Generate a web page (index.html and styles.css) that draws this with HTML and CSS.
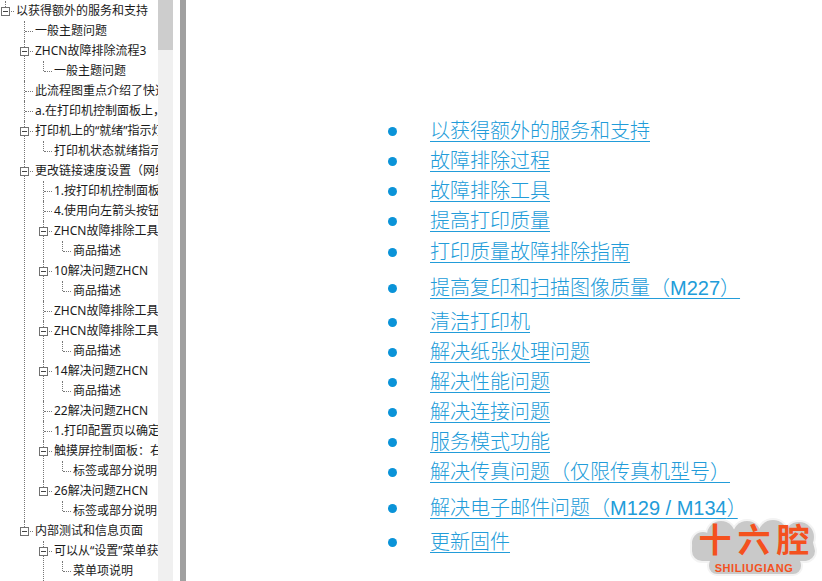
FILE: index.html
```html
<!DOCTYPE html>
<html lang="zh-CN">
<head>
<meta charset="utf-8">
<title>以获得额外的服务和支持</title>
<link rel="stylesheet" href="styles.css">
</head>
<body>
<div class="app">
  <nav class="tree-pane">
    <ul class="tree root">
      <li class="node open"><span class="label">以获得额外的服务和支持</span>
        <ul class="tree">
          <li class="node"><span class="label">一般主题问题</span></li>
          <li class="node open"><span class="label">ZHCN故障排除流程3</span>
            <ul class="tree"><li class="node"><span class="label">一般主题问题</span></li></ul>
          </li>
          <li class="node"><span class="label">此流程图重点介绍了快速解决问题的方法</span></li>
          <li class="node"><span class="label">a.在打印机控制面板上，按下按钮</span></li>
          <li class="node open"><span class="label">打印机上的“就绪”指示灯</span>
            <ul class="tree"><li class="node"><span class="label">打印机状态就绪指示灯说明</span></li></ul>
          </li>
          <li class="node open"><span class="label">更改链接速度设置（网络）</span>
            <ul class="tree">
              <li class="node"><span class="label">1.按打印机控制面板上的按钮</span></li>
              <li class="node"><span class="label">4.使用向左箭头按钮选择</span></li>
              <li class="node open"><span class="label">ZHCN故障排除工具</span>
                <ul class="tree"><li class="node"><span class="label">商品描述</span></li></ul>
              </li>
              <li class="node open"><span class="label">10解决问题ZHCN</span>
                <ul class="tree"><li class="node"><span class="label">商品描述</span></li></ul>
              </li>
              <li class="node"><span class="label">ZHCN故障排除工具</span></li>
              <li class="node open"><span class="label">ZHCN故障排除工具</span>
                <ul class="tree"><li class="node"><span class="label">商品描述</span></li></ul>
              </li>
              <li class="node open"><span class="label">14解决问题ZHCN</span>
                <ul class="tree"><li class="node"><span class="label">商品描述</span></li></ul>
              </li>
              <li class="node"><span class="label">22解决问题ZHCN</span></li>
              <li class="node"><span class="label">1.打印配置页以确定网络</span></li>
              <li class="node open"><span class="label">触摸屏控制面板：右侧按钮</span>
                <ul class="tree"><li class="node"><span class="label">标签或部分说明</span></li></ul>
              </li>
              <li class="node open"><span class="label">26解决问题ZHCN</span>
                <ul class="tree"><li class="node"><span class="label">标签或部分说明</span></li></ul>
              </li>
            </ul>
          </li>
          <li class="node open"><span class="label">内部测试和信息页面</span>
            <ul class="tree">
              <li class="node open"><span class="label">可以从“设置”菜单获取</span>
                <ul class="tree"><li class="node"><span class="label">菜单项说明</span></li></ul>
              </li>
              <li class="node"><span class="label">菜单项说明</span></li>
            </ul>
          </li>
        </ul>
      </li>
    </ul>
  </nav>
  <div class="scrollbar"><div class="thumb"></div></div>
  <div class="gutter"></div>
  <div class="divider"></div>
  <main class="content">
    <ul class="links">
      <li class="link-row"><span class="bullet"></span><a href="#">以获得额外的服务和支持</a></li>
      <li class="link-row"><span class="bullet"></span><a href="#">故障排除过程</a></li>
      <li class="link-row"><span class="bullet"></span><a href="#">故障排除工具</a></li>
      <li class="link-row"><span class="bullet"></span><a href="#">提高打印质量</a></li>
      <li class="link-row nudge"><span class="bullet"></span><a href="#">打印质量故障排除指南</a></li>
      <li class="link-row tall"><span class="bullet"></span><a href="#">提高复印和扫描图像质量（M227）</a></li>
      <li class="link-row"><span class="bullet"></span><a href="#">清洁打印机</a></li>
      <li class="link-row"><span class="bullet"></span><a href="#">解决纸张处理问题</a></li>
      <li class="link-row"><span class="bullet"></span><a href="#">解决性能问题</a></li>
      <li class="link-row"><span class="bullet"></span><a href="#">解决连接问题</a></li>
      <li class="link-row"><span class="bullet"></span><a href="#">服务模式功能</a></li>
      <li class="link-row"><span class="bullet"></span><a href="#">解决传真问题（仅限传真机型号）</a></li>
      <li class="link-row tall"><span class="bullet"></span><a href="#">解决电子邮件问题（M129 / M134<span class="tight">）</span></a></li>
      <li class="link-row"><span class="bullet"></span><a href="#">更新固件</a></li>
    </ul>
  </main>
</div>
<div class="logo">
  <svg class="logo-blob" viewBox="0 0 130 62" aria-hidden="true">
    <g class="halo">
      <circle cx="14" cy="28" r="13"/><circle cx="32" cy="20" r="16"/><circle cx="58" cy="20" r="16"/>
      <circle cx="84" cy="20" r="17"/><circle cx="110" cy="22" r="17"/><circle cx="116" cy="36" r="12"/>
      <rect x="1" y="20" width="126" height="28" rx="12"/><rect x="18" y="40" width="96" height="21" rx="10"/>
    </g>
    <g class="blob">
      <circle cx="14" cy="28" r="11"/><circle cx="32" cy="20" r="14"/><circle cx="58" cy="20" r="14"/>
      <circle cx="84" cy="20" r="15"/><circle cx="110" cy="22" r="15"/><circle cx="116" cy="36" r="10"/>
      <rect x="3" y="22" width="122" height="24" rx="10"/><rect x="20" y="42" width="92" height="17" rx="8"/>
    </g>
  </svg>
  <div class="logo-text">
    <div class="logo-cn">十六腔</div>
    <div class="logo-en">SHILIUGIANG</div>
  </div>
</div>
</body>
</html>
```

FILE: styles.css
```css
html, body {
  margin: 0;
  padding: 0;
  height: 100%;
  background: #fff;
  overflow: hidden;
}

.app {
  display: flex;
  height: 581px;
  width: 822px;
}

.tree-pane {
  flex: none;
  width: 158px;
  height: 581px;
  padding-top: 1px;
  box-sizing: border-box;
  overflow: hidden;
  font: 12px/20px "Noto Sans", "Noto Sans CJK SC", sans-serif;
  color: #1a1a1a;
}

.tree {
  list-style: none;
  margin: 0;
  padding: 0 0 0 19px;
}

.tree.root {
  padding-left: 1px;
}

.node {
  position: relative;
  white-space: nowrap;
}

.node::before {
  content: "";
  position: absolute;
  left: 4px;
  top: 0;
  bottom: 0;
  border-left: 1px dotted #777;
}

.node:last-child::before {
  bottom: auto;
  height: 10px;
}

.label {
  display: block;
  position: relative;
  height: 20px;
  padding-left: 15px;
}

.label::before {
  content: "";
  position: absolute;
  left: 5px;
  top: 10px;
  width: 8px;
  border-top: 1px dotted #777;
}

.node.open > .label::after {
  content: "";
  position: absolute;
  left: 0;
  top: 6px;
  width: 7px;
  height: 7px;
  border: 1px solid #707070;
  background: linear-gradient(#444, #444) center / 5px 1px no-repeat #fff;
}

.scrollbar {
  flex: none;
  width: 15px;
  background: #f0f0f0;
}

.thumb {
  height: 50px;
  background: #cdcdcd;
}

.gutter {
  flex: none;
  width: 7px;
}

.divider {
  flex: none;
  width: 6px;
  background: #a0a0a0;
}

.content {
  flex: 1;
  padding: 116px 0 0 202px;
}

.links {
  list-style: none;
  margin: 0;
  padding: 0;
}

.link-row {
  display: flex;
  align-items: center;
  gap: 33px;
  height: 30px;
  white-space: nowrap;
  font: 300 20px/30px "Liberation Sans", "Noto Sans CJK SC", sans-serif;
}

.link-row.nudge {
  margin-top: 1px;
}

.link-row.tall {
  height: 38px;
  margin-top: 2px;
}

.bullet {
  flex: none;
  width: 9px;
  height: 9px;
  border-radius: 50%;
  background: #0a93d8;
}

.link-row a {
  color: #229cd9;
  text-decoration: underline;
  text-decoration-thickness: 1px;
  text-underline-offset: 3px;
}

.tight {
  letter-spacing: -9px;
}

.logo {
  position: absolute;
  left: 689px;
  top: 515px;
  width: 130px;
  height: 62px;
}

.logo-blob {
  position: absolute;
  inset: 0;
  width: 130px;
  height: 62px;
}

.halo { fill: #f3f3f3; }
.blob { fill: #c9c9c9; }

.logo-text {
  position: relative;
  display: flex;
  flex-direction: column;
  align-items: center;
  padding-top: 1px;
  color: #f4511e;
}

.logo-cn {
  font: 700 33px/44px "Noto Sans CJK SC", sans-serif;
  letter-spacing: 6px;
  height: 44px;
  padding-left: 6px;
}

.logo-en {
  font: 700 11px/14px "Liberation Sans", sans-serif;
  letter-spacing: 0.6px;
  margin-top: 1px;
}
```
